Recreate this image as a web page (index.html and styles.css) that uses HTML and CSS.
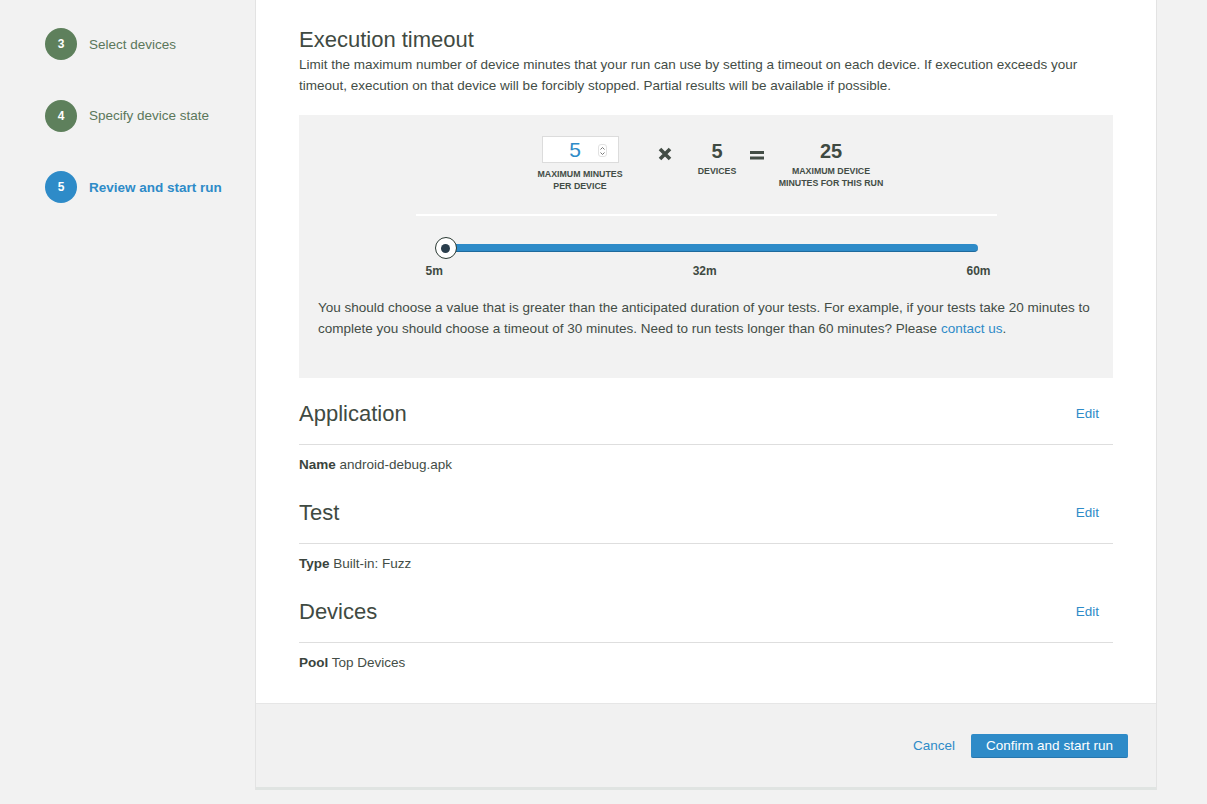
FILE: index.html
```html
<!DOCTYPE html>
<html>
<head>
<meta charset="utf-8">
<link rel="stylesheet" href="styles.css">
</head>
<body>
<div class="page">
  <aside class="steps">
    <div class="step"><span class="num">3</span><span class="label">Select devices</span></div>
    <div class="step"><span class="num">4</span><span class="label">Specify device state</span></div>
    <div class="step active"><span class="num">5</span><span class="label">Review and start run</span></div>
  </aside>
  <main class="card">
    <div class="card-body">
      <h2 class="title">Execution timeout</h2>
      <p class="desc">Limit the maximum number of device minutes that your run can use by setting a timeout on each device. If execution exceeds your timeout, execution on that device will be forcibly stopped. Partial results will be available if possible.</p>

      <div class="timeout-box">
        <div class="calc">
          <div class="col col-input">
            <div class="input">
              <span class="input-val">5</span>
              <span class="spin"><svg width="7" height="12" viewBox="0 0 7 12"><path d="M1.5 4.5 L3.5 2.5 L5.5 4.5 M1.5 7.5 L3.5 9.5 L5.5 7.5" fill="none" stroke="#777" stroke-width="1"/></svg></span>
            </div>
            <div class="cap cap-input">MAXIMUM MINUTES<br>PER DEVICE</div>
          </div>
          <div class="op times">
            <svg width="14" height="14" viewBox="0 0 14 14"><path d="M2 2 L12 12 M12 2 L2 12" stroke="#434d46" stroke-width="3.6" stroke-linecap="butt"/></svg>
          </div>
          <div class="col col-dev">
            <div class="big">5</div>
            <div class="cap">DEVICES</div>
          </div>
          <div class="op eq">
            <svg width="14" height="10" viewBox="0 0 14 10"><rect x="0" y="1" width="14" height="3" fill="#434d46"/><rect x="0" y="6.5" width="14" height="3" fill="#434d46"/></svg>
          </div>
          <div class="col col-total">
            <div class="big">25</div>
            <div class="cap">MAXIMUM DEVICE<br>MINUTES FOR THIS RUN</div>
          </div>
        </div>
        <div class="rule"></div>
        <div class="slider">
          <div class="track-wrap">
            <div class="track"></div>
            <div class="knob"><span class="dot"></span></div>
          </div>
          <div class="ticks"><span>5m</span><span>32m</span><span>60m</span></div>
        </div>
        <p class="hint">You should choose a value that is greater than the anticipated duration of your tests. For example, if your tests take 20 minutes to complete you should choose a timeout of 30 minutes. Need to run tests longer than 60 minutes? Please <a href="#" class="link">contact us</a>.</p>
      </div>

      <section class="sec">
        <div class="sec-head"><h3>Application</h3><a href="#" class="edit">Edit</a></div>
        <div class="sec-row"><b>Name</b> android-debug.apk</div>
      </section>
      <section class="sec">
        <div class="sec-head"><h3>Test</h3><a href="#" class="edit">Edit</a></div>
        <div class="sec-row"><b>Type</b> Built-in: Fuzz</div>
      </section>
      <section class="sec">
        <div class="sec-head"><h3>Devices</h3><a href="#" class="edit">Edit</a></div>
        <div class="sec-row"><b>Pool</b> Top Devices</div>
      </section>
    </div>
    <div class="card-foot">
      <a href="#" class="cancel">Cancel</a>
      <button class="primary">Confirm and start run</button>
    </div>
  </main>
</div>
</body>
</html>
```

FILE: styles.css
```css
* { box-sizing: border-box; }
html, body {
  margin: 0;
  padding: 0;
  background: #f2f2f2;
  font-family: "Liberation Sans", Arial, sans-serif;
  font-size: 13.5px;
  color: #434d46;
}
.page {
  display: flex;
  align-items: flex-start;
  width: 1207px;
  height: 804px;
  overflow: hidden;
}
.steps {
  width: 255px;
  flex: none;
  padding: 28px 0 0 45px;
}
.step {
  display: flex;
  align-items: center;
  gap: 12px;
  height: 32px;
  margin-bottom: 39.5px;
}
.step .num {
  width: 32px;
  height: 32px;
  border-radius: 50%;
  background: #5e805c;
  color: #fff;
  font-size: 12px;
  font-weight: bold;
  display: flex;
  align-items: center;
  justify-content: center;
}
.step .label {
  color: #5b775b;
  font-size: 13.5px;
}
.step.active .num { background: #2e8bc8; }
.step.active .label { color: #2e8bc8; font-weight: bold; }

.card {
  width: 902px;
  flex: none;
  border-left: 1px solid #e3e3e3;
  border-right: 1px solid #e3e3e3;
}
.card-body {
  background: #fff;
  padding: 28px 43px 30px 43px;
}
.title {
  margin: 0;
  font-size: 22px;
  line-height: 24px;
  font-weight: normal;
  color: #3f4a42;
}
.desc {
  margin: 2px 0 0 0;
  line-height: 21px;
}
.timeout-box {
  margin-top: 19px;
  background: #f2f2f2;
  padding: 21px 19px 39px 19px;
}
.calc {
  display: flex;
  align-items: flex-start;
  padding-left: 212px;
  height: 77px;
}
.col {
  display: flex;
  flex-direction: column;
  align-items: center;
  text-align: center;
}
.col-input { width: 100px; }
.input {
  width: 77px;
  height: 27px;
  background: #fff;
  border: 1px solid #dcdcdc;
  position: relative;
  display: flex;
  align-items: center;
  justify-content: center;
}
.input-val {
  color: #2e8bc8;
  font-size: 21px;
  line-height: 24px;
  margin-left: -10px;
}
.spin {
  position: absolute;
  right: 11px;
  top: 7px;
  width: 9px;
  height: 13px;
  border: 1px solid #e2e2e2;
  border-radius: 3px;
  display: flex;
  align-items: center;
  justify-content: center;
}
.cap {
  font-size: 8.8px;
  font-weight: bold;
  line-height: 12px;
  color: #434d46;
  white-space: nowrap;
}
.cap-input { margin-top: 5px; }
.big {
  font-size: 20px;
  font-weight: bold;
  line-height: 24px;
  margin-top: 3px;
  margin-bottom: 2px;
  color: #3f4a42;
}
.op {
  display: flex;
  align-items: center;
  justify-content: center;
}
.times { width: 20px; margin-left: 25px; margin-top: 11px; }
.col-dev { width: 60px; margin-left: 12px; }
.eq { width: 16px; margin-left: 2px; margin-top: 14px; }
.col-total { width: 110px; margin-left: 11px; }

.rule {
  width: 581px;
  height: 2px;
  background: #fff;
  margin: 1px auto 0 auto;
}
.slider {
  width: 581px;
  margin: 21px auto 0 auto;
}
.track-wrap {
  position: relative;
  height: 22px;
  margin: 0 19px 0 30px;
}
.track {
  position: absolute;
  left: 0;
  right: 0;
  top: 7px;
  height: 8px;
  background: #2e8bc8;
  border-bottom: 1.5px solid #1f6a9c;
  border-radius: 4px;
}
.knob {
  position: absolute;
  left: -11px;
  top: 0;
  width: 22px;
  height: 22px;
  border-radius: 50%;
  background: #fff;
  border: 1.5px solid #2b3a33;
  display: flex;
  align-items: center;
  justify-content: center;
}
.knob .dot {
  width: 9px;
  height: 9px;
  border-radius: 50%;
  background: #2a3e4c;
}
.ticks {
  display: flex;
  justify-content: space-between;
  padding: 0 6px 0 10px;
  margin-top: 5px;
  font-size: 12px;
  font-weight: bold;
  line-height: 14px;
  color: #3f4a42;
}
.hint {
  margin: 19px 0 0 0;
  line-height: 21px;
}
.link { color: #2e8bc8; text-decoration: none; }

.sec { margin-top: 23px; }
.sec + .sec { margin-top: 25px; }
.sec-head {
  display: flex;
  justify-content: space-between;
  align-items: center;
  padding-bottom: 17px;
  border-bottom: 1px solid #dedede;
}
.sec-head h3 {
  margin: 0;
  font-size: 22px;
  line-height: 26px;
  font-weight: normal;
  color: #3f4a42;
}
.edit {
  color: #2e8bc8;
  text-decoration: none;
  font-size: 13.5px;
  margin-right: 14px;
  margin-top: -2px;
}
.sec-row {
  margin-top: 10px;
  line-height: 20px;
}
.sec-row b { font-weight: bold; color: #3a443d; }

.card-foot {
  background: #f1f1f1;
  border-top: 1px solid #e6e6e6;
  border-bottom: 3px solid #e0e4e2;
  height: 87px;
  display: flex;
  justify-content: flex-end;
  align-items: flex-start;
  padding: 30px 28px 0 0;
  gap: 16px;
}
.cancel {
  color: #2e8bc8;
  text-decoration: none;
  font-size: 13.5px;
  line-height: 24px;
}
.primary {
  width: 157px;
  height: 24px;
  background: #2e8bc8;
  color: #fff;
  border: none;
  border-bottom: 1px solid #2777ad;
  border-radius: 2px;
  font-family: "Liberation Sans", Arial, sans-serif;
  font-size: 13.5px;
  padding: 0;
}
```
